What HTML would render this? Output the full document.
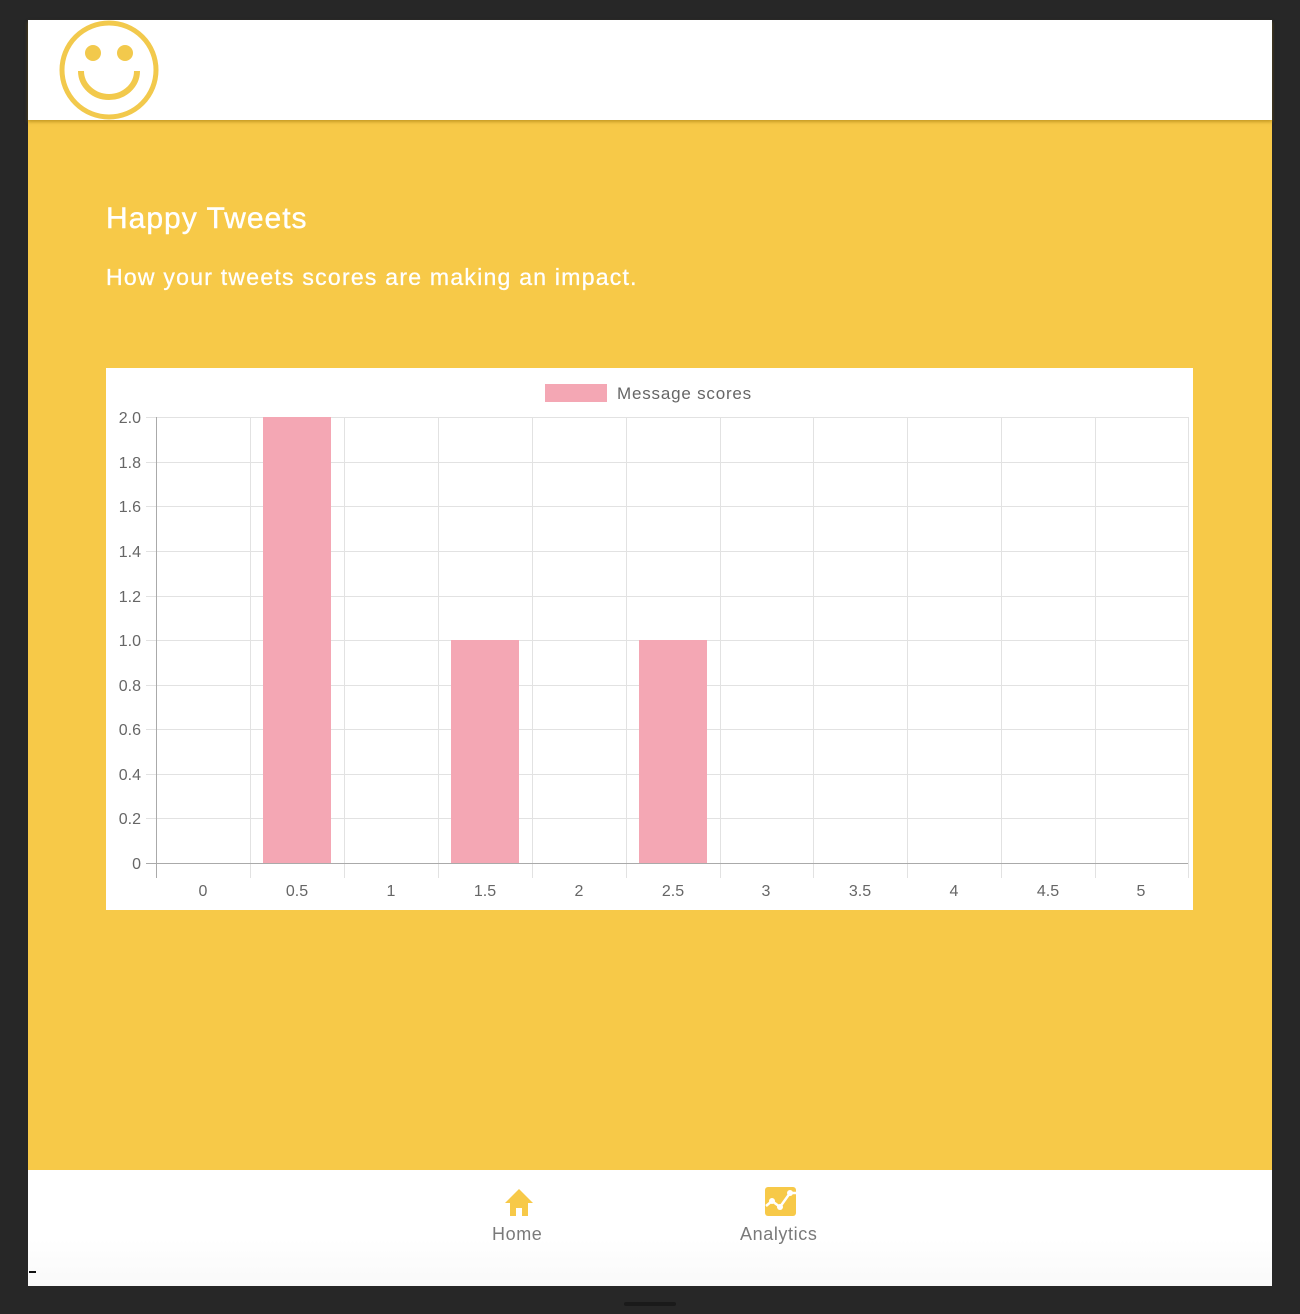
<!DOCTYPE html>
<html><head><meta charset="utf-8"><style>
html,body{margin:0;padding:0;background:#272727;width:1300px;height:1314px;overflow:hidden;font-family:"Liberation Sans",sans-serif}
.app{position:absolute;left:28px;top:20px;width:1244px;height:1266px;background:#f7c948}
.hdr{position:absolute;left:0;top:0;width:1244px;height:100px;background:#fff;box-shadow:0 2px 3px rgba(150,110,0,.5)}
.t1{position:absolute;left:78px;top:182px;color:#fff;font-size:30px;letter-spacing:1px;margin:0;-webkit-text-stroke:0.4px #fff}
.t2{position:absolute;left:78px;top:244px;color:#fff;font-size:23px;letter-spacing:1.25px;-webkit-text-stroke:0.3px #fff}
.chart{position:absolute;left:78px;top:348px;width:1087px;height:542px;background:#fff}
.ftr{position:absolute;left:0;top:1150px;width:1244px;height:116px;background:linear-gradient(#fff 60%,#f9f9f9)}
.lbl{position:absolute;color:#7a7a7a;font-size:18px;top:54px;letter-spacing:0.6px}
</style></head><body>
<div class="app">
<div class="hdr">
<svg width="102" height="102" style="position:absolute;left:30px;top:-1px" viewBox="0 0 102 102">
<circle cx="51" cy="51" r="47" fill="none" stroke="#f2c94c" stroke-width="5"/>
<circle cx="35" cy="34" r="8" fill="#f2c94c"/><circle cx="67" cy="34" r="8" fill="#f2c94c"/>
<path d="M23 52 A28 26 0 0 0 79 52" fill="none" stroke="#f2c94c" stroke-width="6"/>
</svg>
</div>
<div class="t1">Happy Tweets</div>
<div class="t2">How your tweets scores are making an impact.</div>
<div class="chart">
<svg width="1087" height="542" viewBox="106 368 1087 542" style="font-family:'Liberation Sans',sans-serif" fill="#666">
<rect x="545" y="384" width="62" height="18" fill="#f4a7b4"/>
<text x="617" y="399" font-size="17" fill="#666" letter-spacing="0.8">Message scores</text>
<g stroke="#e2e2e2" stroke-width="1">
<line x1="146" x2="1188" y1="417.5" y2="417.5"/><line x1="146" x2="1188" y1="462.5" y2="462.5"/><line x1="146" x2="1188" y1="506.5" y2="506.5"/><line x1="146" x2="1188" y1="551.5" y2="551.5"/><line x1="146" x2="1188" y1="596.5" y2="596.5"/><line x1="146" x2="1188" y1="640.5" y2="640.5"/><line x1="146" x2="1188" y1="685.5" y2="685.5"/><line x1="146" x2="1188" y1="729.5" y2="729.5"/><line x1="146" x2="1188" y1="774.5" y2="774.5"/><line x1="146" x2="1188" y1="818.5" y2="818.5"/>
<line x1="250.5" x2="250.5" y1="417" y2="878"/><line x1="344.5" x2="344.5" y1="417" y2="878"/><line x1="438.5" x2="438.5" y1="417" y2="878"/><line x1="532.5" x2="532.5" y1="417" y2="878"/><line x1="626.5" x2="626.5" y1="417" y2="878"/><line x1="720.5" x2="720.5" y1="417" y2="878"/><line x1="813.5" x2="813.5" y1="417" y2="878"/><line x1="907.5" x2="907.5" y1="417" y2="878"/><line x1="1001.5" x2="1001.5" y1="417" y2="878"/><line x1="1095.5" x2="1095.5" y1="417" y2="878"/><line x1="1188.5" x2="1188.5" y1="417" y2="878"/>
</g>
<rect x="263" y="417" width="68" height="446" fill="#f4a7b4"/>
<rect x="451" y="640" width="68" height="223" fill="#f4a7b4"/>
<rect x="639" y="640" width="68" height="223" fill="#f4a7b4"/>
<line x1="156.5" x2="156.5" y1="417" y2="878" stroke="#aaa"/>
<line x1="146" x2="1188" y1="863.5" y2="863.5" stroke="#aaa"/>
<g font-size="16" text-anchor="end">
<text x="141" y="423">2.0</text><text x="141" y="468">1.8</text><text x="141" y="512">1.6</text><text x="141" y="557">1.4</text><text x="141" y="602">1.2</text><text x="141" y="646">1.0</text><text x="141" y="691">0.8</text><text x="141" y="735">0.6</text><text x="141" y="780">0.4</text><text x="141" y="824">0.2</text><text x="141" y="869">0</text>
</g>
<g font-size="16" text-anchor="middle">
<text x="203" y="896">0</text><text x="297" y="896">0.5</text><text x="391" y="896">1</text><text x="485" y="896">1.5</text><text x="579" y="896">2</text><text x="673" y="896">2.5</text><text x="766" y="896">3</text><text x="860" y="896">3.5</text><text x="954" y="896">4</text><text x="1048" y="896">4.5</text><text x="1141" y="896">5</text>
</g>
</svg>
</div>
<div class="ftr">
<svg width="30" height="28" style="position:absolute;left:476px;top:18px" viewBox="0 0 30 28"><path d="M15 1 L1 15 H6 V28 H12 V20 H18 V28 H24 V15 H29 Z" fill="#f7c948"/></svg>
<div class="lbl" style="left:464px">Home</div>
<svg width="32" height="30" style="position:absolute;left:737px;top:17px" viewBox="0 0 32 30"><rect x="0" y="0" width="31" height="29" rx="3" fill="#f7c948"/><polyline points="1,19 7,14 15,20 25,6 31,6" fill="none" stroke="#fff" stroke-width="2.5"/><circle cx="7" cy="14" r="3" fill="#fff"/><circle cx="15" cy="20" r="3" fill="#fff"/><circle cx="25" cy="6" r="3" fill="#fff"/></svg>
<div class="lbl" style="left:712px">Analytics</div>
<div style="position:absolute;left:1px;top:101px;width:7px;height:2px;background:#111"></div>
</div>
</div>
<div style="position:absolute;left:624px;top:1302px;width:52px;height:4px;background:#1a1a1a;border-radius:2px"></div>
</body></html>
